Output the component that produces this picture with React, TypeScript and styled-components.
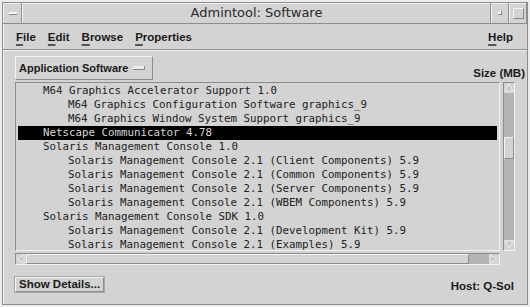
import styled, { createGlobalStyle } from "styled-components";

const GlobalStyle = createGlobalStyle`
  html, body {
    margin: 0;
    padding: 0;
    background: #ececec;
  }
  #root {
    width: 530px;
    height: 307px;
  }
`;

const BG = "#d3d3d3";
const DARK = "#8c8c8c";
const LIGHT = "#f2f2f2";
const TROUGH = "#b4b4b4";

const Screen = styled.div`
  width: 530px;
  height: 307px;
  padding: 2px 2px 2px 2px;
  box-sizing: border-box;
  background: #ececec;
`;

const Frame = styled.div`
  width: 100%;
  height: 100%;
  box-sizing: border-box;
  background: ${BG};
  border: 1px solid ${DARK};
  box-shadow: inset 1px 1px 0 ${LIGHT};
  display: flex;
  flex-direction: column;
  font-family: "Liberation Sans", Arial, sans-serif;
  color: #1a1a1a;
`;

const TitleBar = styled.div`
  height: 20px;
  display: flex;
  align-items: stretch;
  border-bottom: 1px solid ${DARK};
`;

const FrameButton = styled.div<{ $w: number }>`
  width: ${(p) => p.$w}px;
  box-sizing: border-box;
  border-left: 1px solid ${LIGHT};
  border-right: 1px solid ${DARK};
  display: flex;
  align-items: center;
  justify-content: center;
`;

const MenuGlyph = styled.div`
  width: 8px;
  height: 2px;
  background: #f4f4f4;
  border-bottom: 1px solid #888;
`;

const MinGlyph = styled.div`
  width: 3px;
  height: 3px;
  background: #f4f4f4;
  border-right: 1px solid #888;
  border-bottom: 1px solid #888;
`;

const MaxGlyph = styled.div`
  width: 9px;
  height: 9px;
  border: 1px solid #f4f4f4;
  border-right-color: #888;
  border-bottom-color: #888;
`;

const Title = styled.div`
  flex: 1;
  text-align: center;
  font-family: "DejaVu Sans", sans-serif;
  font-size: 13px;
  line-height: 20px;
  color: #2a2a2a;
  border-left: 1px solid ${LIGHT};
  border-right: 1px solid ${DARK};
`;

const MenuBar = styled.div`
  height: 25px;
  display: flex;
  align-items: center;
  padding: 0 14px 0 13px;
  border-bottom: 1px solid ${DARK};
  box-shadow: 0 1px 0 ${LIGHT};
  font-weight: bold;
  font-size: 11.5px;
`;

const MenuItem = styled.span<{ $push?: boolean }>`
  margin-right: 12px;
  margin-left: ${(p) => (p.$push ? "auto" : "0")};
  ${(p) => (p.$push ? "margin-right: 0;" : "")}
`;

const Mnemonic = styled.span`
  text-decoration: underline;
  text-decoration-thickness: 2px;
  text-underline-offset: 3px;
  text-decoration-color: #555;
`;

const Toolbar = styled.div`
  display: flex;
  align-items: flex-end;
  justify-content: space-between;
  padding: 6px 2px 2px 12px;
`;

const OptionButton = styled.div`
  height: 24px;
  width: 138px;
  box-sizing: border-box;
  display: flex;
  align-items: center;
  gap: 5px;
  padding-left: 3px;
  white-space: nowrap;
  font-weight: bold;
  font-size: 11px;
  border: 1px solid;
  border-color: ${LIGHT} ${DARK} ${DARK} ${LIGHT};
`;

const OptionIndicator = styled.span`
  width: 11px;
  height: 3px;
  background: #ececec;
  border-bottom: 1px solid #888;
  border-right: 1px solid #888;
`;

const SizeLabel = styled.div`
  font-weight: bold;
  font-size: 11.5px;
  padding-bottom: 1px;
`;

const ListArea = styled.div`
  display: grid;
  grid-template-columns: 485px 12px;
  grid-template-rows: 169px 12px;
  column-gap: 3px;
  row-gap: 2px;
  padding-left: 12px;
`;

const ListBox = styled.div`
  box-sizing: border-box;
  border: 1px solid;
  border-color: ${DARK} ${LIGHT} ${LIGHT} ${DARK};
  padding: 1px 2px;
  overflow: hidden;
  font-family: "DejaVu Sans Mono", "Liberation Mono", monospace;
  font-size: 10.8px;
  color: #222;
`;

const Row = styled.div<{ $level: number; $selected?: boolean }>`
  height: 14px;
  line-height: 14px;
  white-space: nowrap;
  padding-left: ${(p) => (p.$level === 1 ? 25 : 50)}px;
  background: ${(p) => (p.$selected ? "#000" : "transparent")};
  color: ${(p) => (p.$selected ? "#d8d8d8" : "#222")};
`;

const VScroll = styled.div`
  box-sizing: border-box;
  background: ${TROUGH};
  border: 1px solid;
  border-color: ${DARK} ${LIGHT} ${LIGHT} ${DARK};
  display: flex;
  flex-direction: column;
`;

const HScroll = styled.div`
  box-sizing: border-box;
  background: ${TROUGH};
  border: 1px solid;
  border-color: ${DARK} ${LIGHT} ${LIGHT} ${DARK};
  display: flex;
`;

const ArrowBox = styled.div`
  flex: 0 0 10px;
  display: flex;
  align-items: center;
  justify-content: center;
  background: ${BG};
`;

const Trough = styled.div<{ $size: number }>`
  flex: 0 0 ${(p) => p.$size}px;
`;

const Thumb = styled.div<{ $size: number }>`
  flex: 0 0 ${(p) => p.$size}px;
  box-sizing: border-box;
  background: ${BG};
  border: 1px solid;
  border-color: ${LIGHT} ${DARK} ${DARK} ${LIGHT};
`;

const Spacer = styled.div`
  flex: 1;
`;

const Footer = styled.div`
  display: flex;
  align-items: center;
  justify-content: space-between;
  padding: 12px 13px 0 12px;
`;

const PushButton = styled.div`
  height: 15px;
  box-sizing: border-box;
  padding: 0 3px;
  line-height: 13px;
  font-weight: bold;
  font-size: 11.5px;
  border: 1px solid;
  border-color: ${LIGHT} ${DARK} ${DARK} ${LIGHT};
  box-shadow: 0 0 0 1px #a8a8a8;
`;

const HostLabel = styled.div`
  font-weight: bold;
  font-size: 11.5px;
  margin-top: 3px;
`;

function Arrow({ dir }: { dir: "up" | "down" | "left" | "right" }) {
  const pts = {
    up: "1,8 5,1 9,8",
    down: "1,1 5,8 9,1",
    left: "8,1 1,5 8,9",
    right: "1,1 8,5 1,9",
  }[dir];
  return (
    <svg width="10" height="10" viewBox="0 0 10 10">
      <polygon points={pts} fill="#c8c8c8" stroke="#eeeeee" strokeWidth="1" />
    </svg>
  );
}

const rows: { text: string; level: number; selected?: boolean }[] = [
  { text: "M64 Graphics Accelerator Support 1.0", level: 1 },
  { text: "M64 Graphics Configuration Software graphics_9", level: 2 },
  { text: "M64 Graphics Window System Support graphics_9", level: 2 },
  { text: "Netscape Communicator 4.78", level: 1, selected: true },
  { text: "Solaris Management Console 1.0", level: 1 },
  { text: "Solaris Management Console 2.1 (Client Components) 5.9", level: 2 },
  { text: "Solaris Management Console 2.1 (Common Components) 5.9", level: 2 },
  { text: "Solaris Management Console 2.1 (Server Components) 5.9", level: 2 },
  { text: "Solaris Management Console 2.1 (WBEM Components) 5.9", level: 2 },
  { text: "Solaris Management Console SDK 1.0", level: 1 },
  { text: "Solaris Management Console 2.1 (Development Kit) 5.9", level: 2 },
  { text: "Solaris Management Console 2.1 (Examples) 5.9", level: 2 },
];

export default function App() {
  return (
    <>
      <GlobalStyle />
      <Screen>
        <Frame>
          <TitleBar>
            <FrameButton $w={19}>
              <MenuGlyph />
            </FrameButton>
            <Title>Admintool: Software</Title>
            <FrameButton $w={18}>
              <MinGlyph />
            </FrameButton>
            <FrameButton $w={18}>
              <MaxGlyph />
            </FrameButton>
          </TitleBar>

          <MenuBar>
            <MenuItem><Mnemonic>F</Mnemonic>ile</MenuItem>
            <MenuItem><Mnemonic>E</Mnemonic>dit</MenuItem>
            <MenuItem><Mnemonic>B</Mnemonic>rowse</MenuItem>
            <MenuItem><Mnemonic>P</Mnemonic>roperties</MenuItem>
            <MenuItem $push><Mnemonic>H</Mnemonic>elp</MenuItem>
          </MenuBar>

          <Toolbar>
            <OptionButton>
              Application Software
              <OptionIndicator />
            </OptionButton>
            <SizeLabel>Size (MB)</SizeLabel>
          </Toolbar>

          <ListArea>
            <ListBox>
              {rows.map((r, i) => (
                <Row key={i} $level={r.level} $selected={r.selected}>
                  {r.text}
                </Row>
              ))}
            </ListBox>
            <VScroll>
              <ArrowBox><Arrow dir="up" /></ArrowBox>
              <Trough $size={44} />
              <Thumb $size={22} />
              <Spacer />
              <ArrowBox><Arrow dir="down" /></ArrowBox>
            </VScroll>
            <HScroll>
              <ArrowBox><Arrow dir="left" /></ArrowBox>
              <Thumb $size={443} />
              <Spacer />
              <ArrowBox><Arrow dir="right" /></ArrowBox>
            </HScroll>
          </ListArea>

          <Footer>
            <PushButton>Show Details...</PushButton>
            <HostLabel>Host: Q-Sol</HostLabel>
          </Footer>
        </Frame>
      </Screen>
    </>
  );
}
